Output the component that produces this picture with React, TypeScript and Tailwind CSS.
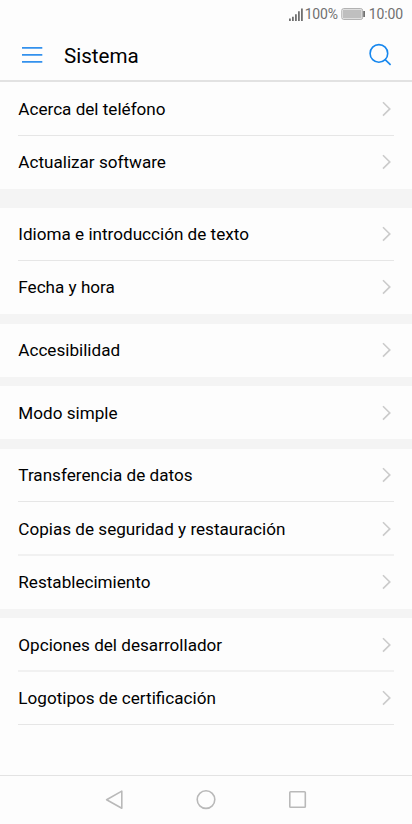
type Divider = 'thin' | 'soft' | 'none';
type Row = { label: string; height: string; divider: Divider };
type Group = { rows: Row[]; gap: string };

const dividerClass: Record<Divider, string> = {
  thin: 'border-b border-[#e6e6e6]',
  soft: 'border-b-2 border-[#f1f1f1] pt-px',
  none: 'border-b border-transparent',
};

const groups: Group[] = [
  {
    rows: [
      { label: 'Acerca del teléfono', height: 'h-[54px]', divider: 'thin' },
      { label: 'Actualizar software', height: 'h-[53px]', divider: 'none' },
    ],
    gap: 'h-[19px]',
  },
  {
    rows: [
      { label: 'Idioma e introducción de texto', height: 'h-[53px]', divider: 'thin' },
      { label: 'Fecha y hora', height: 'h-[53px]', divider: 'none' },
    ],
    gap: 'h-[10px]',
  },
  { rows: [{ label: 'Accesibilidad', height: 'h-[53px]', divider: 'none' }], gap: 'h-[9px]' },
  { rows: [{ label: 'Modo simple', height: 'h-[53px] pt-px', divider: 'none' }], gap: 'h-[10px]' },
  {
    rows: [
      { label: 'Transferencia de datos', height: 'h-[53px]', divider: 'thin' },
      { label: 'Copias de seguridad y restauración', height: 'h-[54px]', divider: 'soft' },
      { label: 'Restablecimiento', height: 'h-[53px]', divider: 'none' },
    ],
    gap: 'h-[9px]',
  },
  {
    rows: [
      { label: 'Opciones del desarrollador', height: 'h-[54px]', divider: 'soft' },
      { label: 'Logotipos de certificación', height: 'h-[53px]', divider: 'thin' },
    ],
    gap: 'h-0',
  },
];

function Chevron() {
  return (
    <svg className="mr-[2px] h-4 w-[10px] shrink-0" viewBox="0 0 10 16" fill="none" stroke="#cbcbcb" strokeWidth="1.6">
      <path d="M1 1.2 7.8 7.9 1 14.6" />
    </svg>
  );
}

function StatusBar() {
  return (
    <div className="flex h-[28px] items-center justify-end pr-[9px] text-[14px] leading-[28px] text-[#707070]">
      <svg className="mr-[2px] h-[13px] w-[14px]" viewBox="0 0 14 13" fill="#707070">
        <path d="M0 10.5h1.8V13H0zM3 8.7h1.8V13H3zM6 6.2h1.8V13H6zM9 3.2h1.8V13H9zM12 .5h1.8V13H12z" />
      </svg>
      <span className="w-[32px] whitespace-nowrap tracking-[-0.2px]">100%</span>
      <svg className="ml-[4px] mr-[4px] h-[12px] w-[24px]" viewBox="0 0 24 12" fill="none">
        <rect x=".8" y=".6" width="20.8" height="10.8" rx="1.8" stroke="#aaa" />
        <rect x="1.8" y="1.6" width="18.8" height="8.8" fill="#bfbfbf" />
        <path d="M22.2 3H24v6h-1.8z" fill="#707070" />
      </svg>
      <span className="tracking-[-0.1px]">10:00</span>
    </div>
  );
}

export default function App() {
  return (
    <div className="flex h-[824px] w-[412px] flex-col overflow-hidden bg-[#fdfdfd] font-[Roboto,sans-serif] text-black">
      <StatusBar />
      <header className="flex h-[54px] items-center border-b-2 border-[#e2e2e2] pl-[22px] pr-[20px]">
        <svg className="mt-[2px] h-[18px] w-[21px]" viewBox="0 0 21 18" fill="#3391ed">
          <path d="M0 1h20.3v1.8H0zM0 7.9h20.3v1.8H0zM0 14.9h20.3v1.8H0z" />
        </svg>
        <h1 className="ml-[21px] flex-1 pt-[3px] text-[20.6px] leading-[28px]">Sistema</h1>
        <svg className="mt-px h-[23px] w-[23px]" viewBox="0 0 23 23" fill="none" stroke="#1687ee" strokeWidth="1.6">
          <circle cx="9.9" cy="10.4" r="8.8" />
          <path d="m15.9 16.4 5.7 5.5" />
        </svg>
      </header>
      <main className="flex-1">
        {groups.map((group) => (
          <section key={group.rows[0].label}>
            {group.rows.map((row) => (
              <div
                key={row.label}
                className={`mx-[18px] flex items-center justify-between ${row.height} ${dividerClass[row.divider]}`}
              >
                <span className="whitespace-nowrap pl-[0.3px] text-[17.12px] leading-6">{row.label}</span>
                <Chevron />
              </div>
            ))}
            <div className={`bg-[#f4f4f4] ${group.gap}`} />
          </section>
        ))}
      </main>
      <nav className="flex h-[49px] items-center justify-center gap-[72px] border-t border-[#e3e3e3]">
        <svg className="h-5 w-5" viewBox="0 0 20 20" fill="none" stroke="#b9b9b9" strokeWidth="1.6" strokeLinejoin="round">
          <path d="M17.8 1.1v17.2L2.6 9.7z" />
        </svg>
        <svg className="h-5 w-5" viewBox="0 0 20 20" fill="none" stroke="#b9b9b9" strokeWidth="1.6">
          <circle cx="10" cy="9.6" r="8.8" />
        </svg>
        <svg className="h-5 w-5" viewBox="0 0 20 20" fill="none" stroke="#b9b9b9" strokeWidth="1.6">
          <rect x="1.8" y="1.8" width="15.5" height="15.5" rx=".8" />
        </svg>
      </nav>
    </div>
  );
}
